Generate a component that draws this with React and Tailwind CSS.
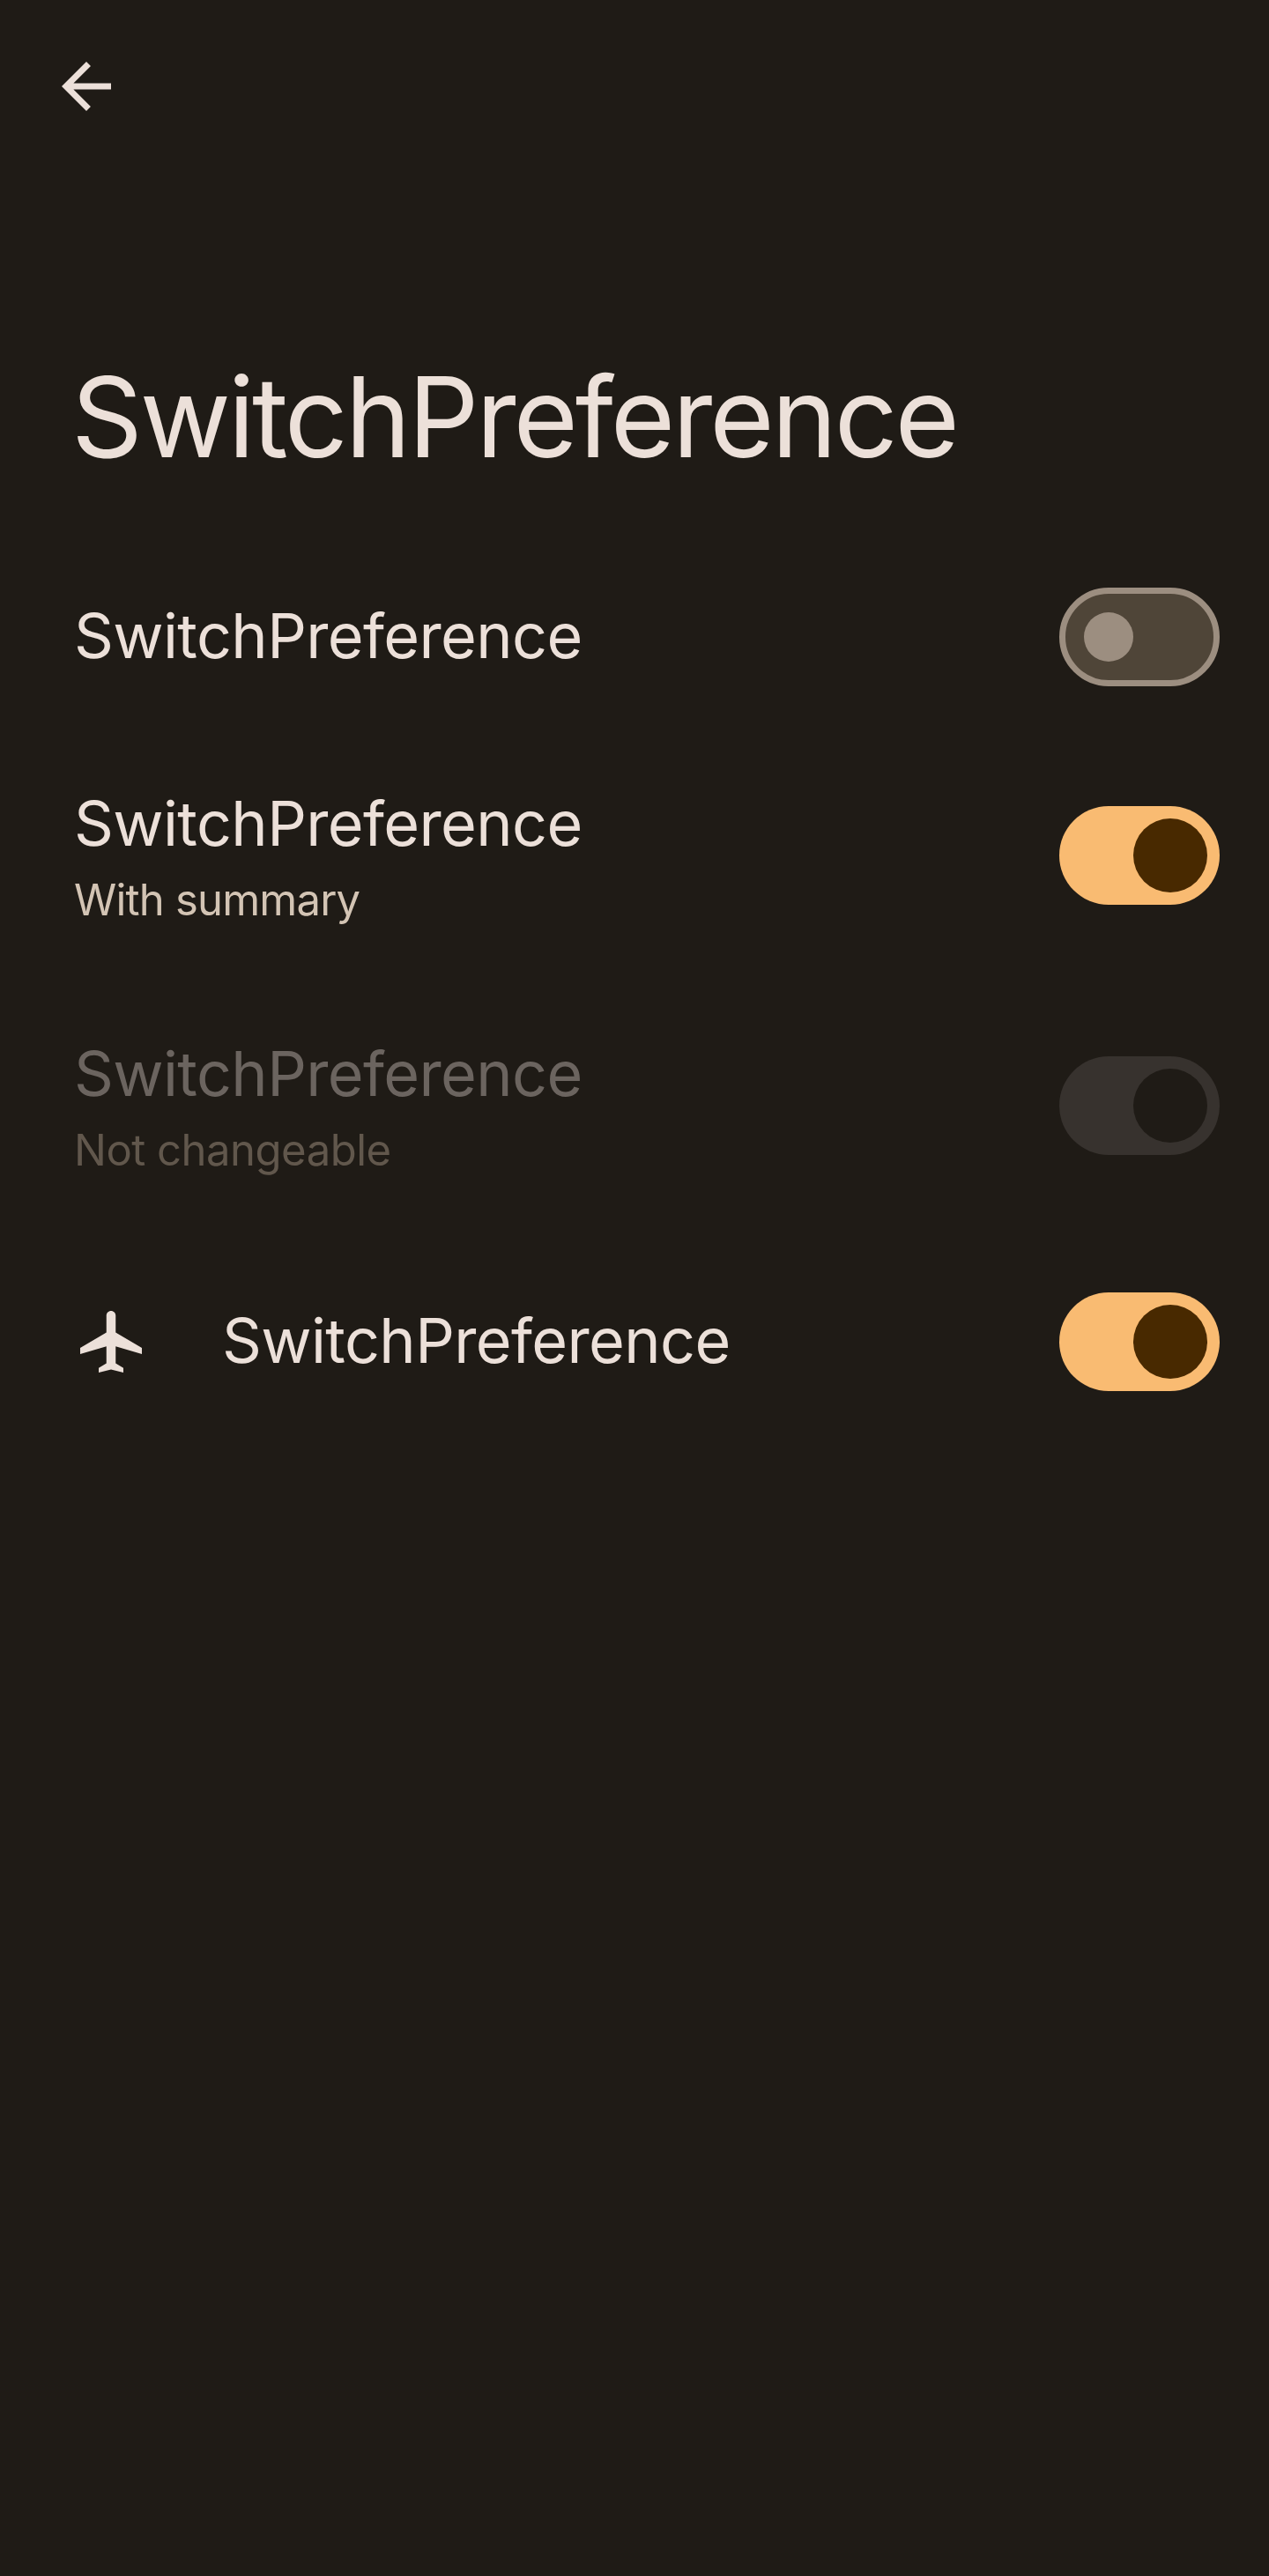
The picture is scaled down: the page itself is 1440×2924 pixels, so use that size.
import React from "react";

function Switch({ on, disabled }) {
  if (!on) {
    return (
      <div className="flex h-28 w-[182px] shrink-0 items-center rounded-full border-[7px] border-[#9c8e80] bg-[#4f4538] pl-[21px]">
        <div className="size-14 rounded-full bg-[#9c8e80]" />
      </div>
    );
  }
  return (
    <div className={`flex h-28 w-[182px] shrink-0 items-center justify-end rounded-full pr-3.5 ${disabled ? "bg-[#37322e]" : "bg-[#f9bb72]"}`}>
      <div className={`size-[84px] rounded-full ${disabled ? "bg-[#1f1b16]" : "bg-[#482900]"}`} />
    </div>
  );
}

function Preference({ title, summary, summaryTracking, icon, on, disabled, className }) {
  return (
    <div className={`flex items-center pl-[84px] pr-14 ${className}`}>
      {icon && <div className="w-[168px] shrink-0">{icon}</div>}
      <div className={`flex-1 ${summary ? "" : "pb-[3px]"}`}>
        <div className={`text-[70px] leading-[100px] tracking-[-0.6px] ${disabled ? "text-[#6b645f]" : "text-[#ece0d9]"}`}>{title}</div>
        {summary && (
          <div className={`text-[49px] leading-[73px] ${summaryTracking} ${disabled ? "text-[#61574c]" : "text-[#d3c4b4]"}`}>{summary}</div>
        )}
      </div>
      <Switch on={on} disabled={disabled} />
    </div>
  );
}

const airplane = (
  <svg viewBox="0 0 24 24" className="size-[84px] fill-[#ece0d9]">
    <path d="M22 16v-2l-8.5-5V3.5C13.5 2.67 12.83 2 12 2s-1.5.67-1.5 1.5V9L2 14v2l8.5-2.5V19L8 20.5V22l4-1 4 1v-1.5L13.5 19v-5.5L22 16z" />
  </svg>
);

export default function App() {
  return (
    <div className="flex min-h-[2924px] w-[1440px] flex-col bg-[#1f1b16] font-['Inter',sans-serif]">
      <header className="h-[617px] px-14 pt-14">
        <svg viewBox="0 0 24 24" className="size-[84px] fill-[#ece0d9]">
          <path d="M20 11H7.83l5.59-5.59L12 4l-8 8 8 8 1.41-1.41L7.83 13H20v-2z" />
        </svg>
        <h1 className="ml-[25px] mt-[258px] text-[126px] leading-[150px] tracking-[-3.15px] text-[#ece0d9]">SwitchPreference</h1>
      </header>
      <main>
        <Preference title="SwitchPreference" className="h-[212px]" />
        <Preference title="SwitchPreference" summary="With summary" summaryTracking="tracking-[-0.8px]" on className="h-[284px]" />
        <Preference title="SwitchPreference" summary="Not changeable" summaryTracking="tracking-[-0.5px]" on disabled className="h-[284px]" />
        <Preference title="SwitchPreference" icon={airplane} on className="h-[252px]" />
      </main>
    </div>
  );
}
